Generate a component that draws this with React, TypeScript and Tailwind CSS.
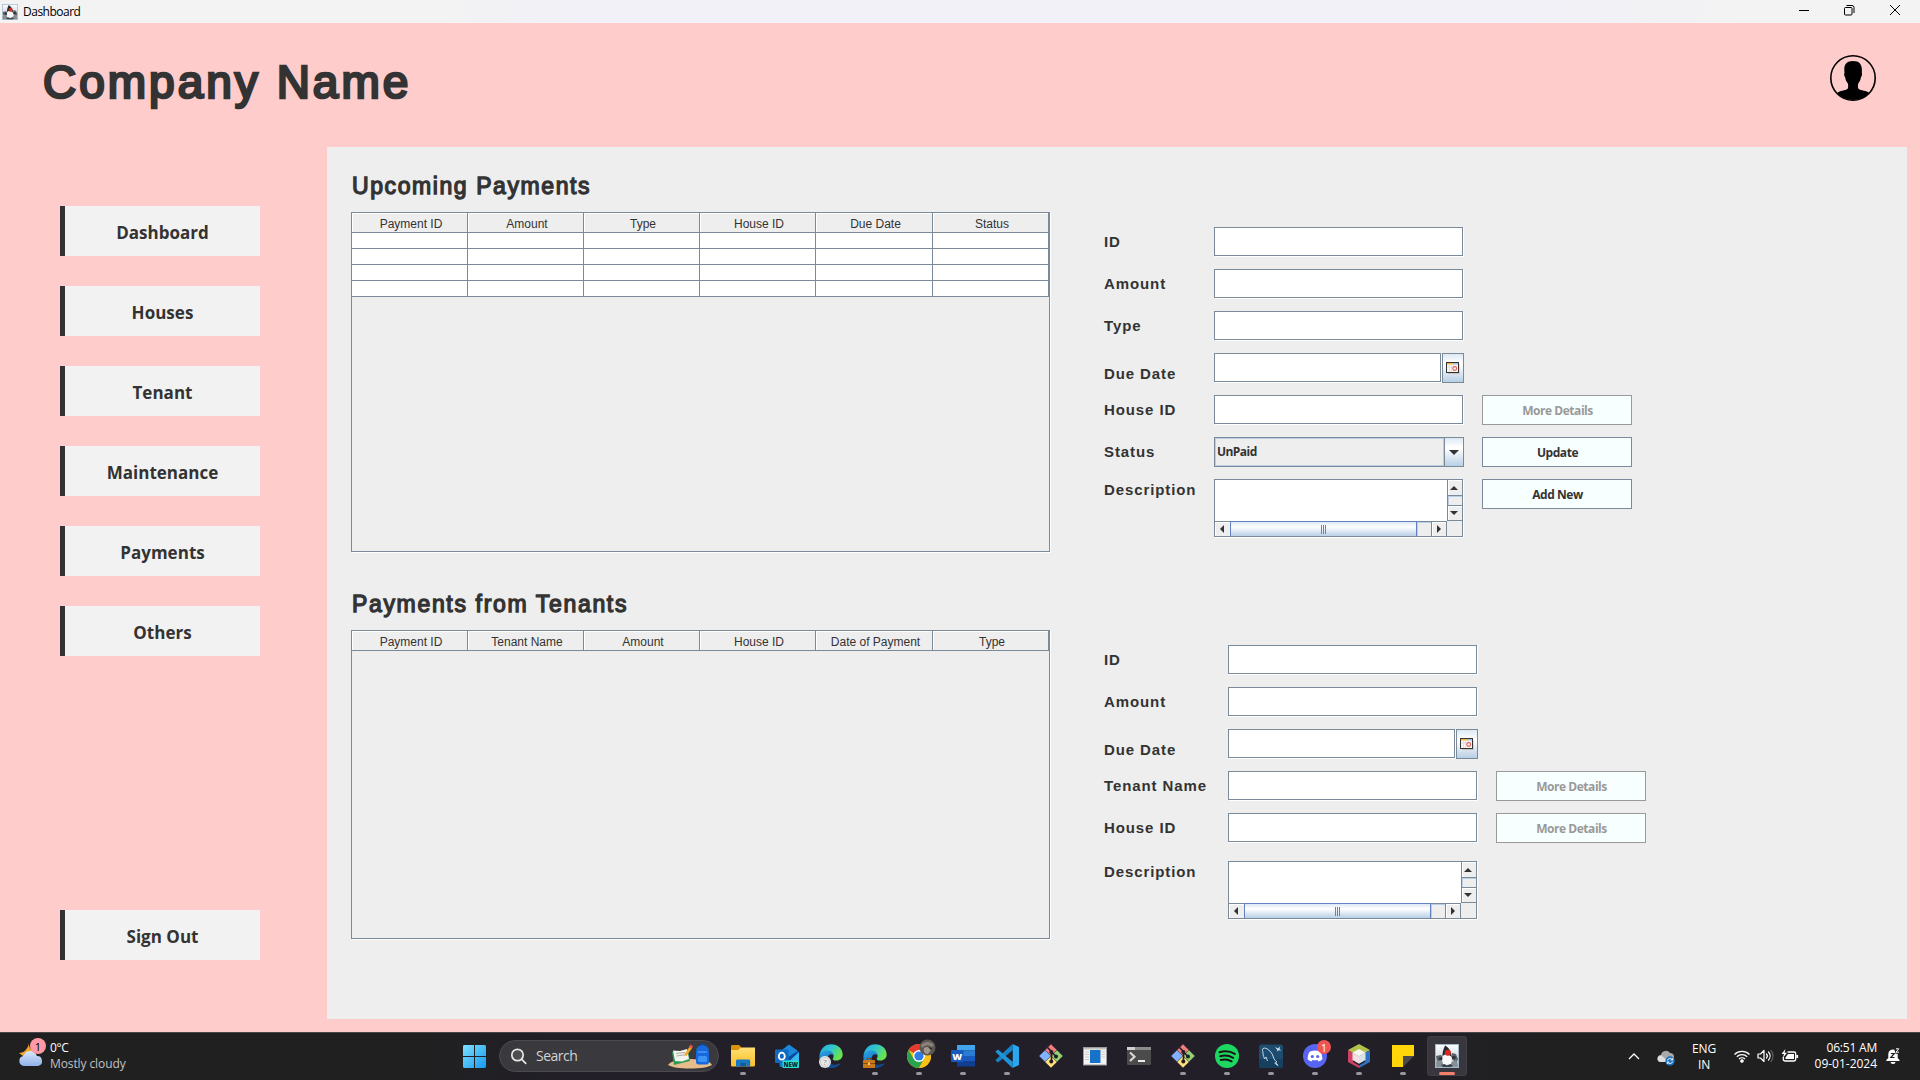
import React from "react";
import type { ReactNode } from "react";

const rounded = "font-['Liberation_Sans',Arial,sans-serif] text-[#333333]";
const segoe = "font-['Open_Sans','Noto_Sans',sans-serif]";

function DukeIcon({ size }: { size: number }) {
  return (
    <svg width={size} height={size} viewBox="0 0 24 24">
      <defs>
        <linearGradient id="dukeBg" x1="0" y1="0" x2="0" y2="1">
          <stop offset="0" stopColor="#fdfeff" />
          <stop offset="0.55" stopColor="#d5dde4" />
          <stop offset="1" stopColor="#8d9aa5" />
        </linearGradient>
      </defs>
      <rect x="0.5" y="0.5" width="23" height="23" fill="url(#dukeBg)" stroke="#9fb8ca" />
      <path d="M1 12l5-1 3 3-3 4-4-1z M17 9l4 1 2 5-2 4-4-4z" fill="#5b6368" />
      <path d="M1 18l5-2 4 6-8 1z M15 19l6-3 2 6-7 1z" fill="#858f96" />
      <path d="M8.500 12.500l-5 1.500 1 2 4-.5z M16 12l5 .5-1 2.500-4-.5z" fill="#2b2f32" />
      <path d="M10.500 2c3 2 5.800 6.500 6.300 11 .3 4-.5 7-2 9l-2.300-1.500-3.500 1.500c-1.700-3-2.200-7-1.200-11z" fill="#f8f8f8" />
      <path d="M10.200 1.500c4 2.500 6 6 6.600 11.500l-4.800-3.500-4.600 2.500c.2-4 1-7.500 2.800-10.500z" fill="#25292b" />
      <circle cx="12.800" cy="8.800" r="3" fill="#d8281f" />
      <path d="M6 21l3.500-1 2.500 1.500 3-1.500 3 1.500-2 1.500H8z" fill="#3c4246" />
    </svg>
  );
}

function Field({ className = "" }: { className?: string }) {
  return <div className={`h-[29px] border border-[#7a8a99] bg-white shadow-[1px_1px_0_#ffffff] ${className}`} />;
}

function CalendarButton() {
  return (
    <div className="ml-px flex h-[30px] w-[22px] items-center justify-center border border-[#7a8a99] bg-[linear-gradient(180deg,#dde8f3_0%,#ffffff_32%,#ffffff_38%,#b8cfe5_100%)]">
      <svg width="14" height="12" viewBox="0 0 14 12">
        <path d="M2 11.500h12V2" stroke="#c9bfb4" fill="none" />
        <rect x="0.5" y="0.5" width="12" height="10" fill="#f6f6f6" stroke="#333" />
        <path d="M1 1h6v1.500H1z" fill="#f5b942" />
        <path d="M7 1h5v1.500H7z" fill="#9dbfe8" />
        <path d="M3.500 3v7M5.500 3v7M1 5h6" stroke="#dcdcdc" strokeWidth="0.7" />
        <circle cx="8.700" cy="6.500" r="1.900" fill="#fff" stroke="#e4544e" strokeWidth="1.100" />
      </svg>
    </div>
  );
}

function DateField() {
  return (
    <div className="flex w-[250px]">
      <Field className="w-[227px]" />
      <CalendarButton />
    </div>
  );
}

function Combo() {
  return (
    <div className="flex h-[30px] w-[250px] border border-[#7a8a99]">
      <div className="flex flex-1 items-center border border-[#b8cfe5] bg-[#eeeeee] pl-px pb-px font-['Open_Sans','Noto_Sans',sans-serif] text-[12px] leading-none font-bold tracking-[-0.55px] text-[#333333]">
        UnPaid
      </div>
      <div className="flex w-[19px] items-center justify-center border-l border-[#7a8a99] bg-[linear-gradient(180deg,#dde8f3_0%,#ffffff_32%,#ffffff_38%,#b8cfe5_100%)]">
        <svg width="10" height="5" viewBox="0 0 10 5"><path d="M0 0h10L5 5z" fill="#333" /></svg>
      </div>
    </div>
  );
}

function TextArea() {
  return (
    <div className="flex h-[58px] w-[249px] flex-col border border-[#7a8a99] bg-[#eeeeee] shadow-[1px_1px_0_#ffffff]">
      <div className="flex h-[41px]">
        <div className="w-[232px] bg-white" />
        <div className="flex w-[15px] flex-col border-l border-[#7a8a99]">
          <div className="flex h-[16px] items-center justify-center border-b border-[#7a8a99] pr-[2px] shadow-[inset_1px_1px_0_#ffffff]">
            <svg width="8" height="4" viewBox="0 0 8 4"><path d="M0 4h8L4 0z" fill="#333" /></svg>
          </div>
          <div className="h-[10px] border-b border-[#7a8a99] shadow-[inset_1px_1px_0_#b8cfe5]" />
          <div className="flex h-[15px] items-center justify-center border-b border-[#7a8a99] pr-[2px] shadow-[inset_1px_1px_0_#ffffff]">
            <svg width="8" height="4" viewBox="0 0 8 4"><path d="M0 0h8L4 4z" fill="#333" /></svg>
          </div>
        </div>
      </div>
      <div className="flex h-[15px]">
        <div className="flex w-[15px] items-center justify-center border-t border-[#7a8a99] pr-[2px] shadow-[inset_1px_1px_0_#ffffff]">
          <svg width="4" height="8" viewBox="0 0 4 8"><path d="M4 0v8L0 4z" fill="#333" /></svg>
        </div>
        <div className="flex w-[187px] items-center justify-center gap-px border border-b-0 border-[#6382bf] bg-[linear-gradient(180deg,#dde8f3_0%,#ffffff_35%,#b8cfe5_100%)]">
          <div className="h-[9px] w-px bg-[#6382bf]" />
          <div className="h-[9px] w-px bg-[#6382bf]" />
          <div className="h-[9px] w-px bg-[#6382bf]" />
        </div>
        <div className="w-[14px] border-t border-[#7a8a99] shadow-[inset_1px_1px_0_#b8cfe5]" />
        <div className="flex w-[16px] items-center justify-center border-t border-r border-l border-[#7a8a99] shadow-[inset_1px_1px_0_#ffffff]">
          <svg width="4" height="8" viewBox="0 0 4 8"><path d="M0 0v8l4-4z" fill="#333" /></svg>
        </div>
      </div>
    </div>
  );
}

function Button({ children, disabled = false }: { children: ReactNode; disabled?: boolean }) {
  return (
    <button
      className={`ml-[18px] h-[30px] w-[150px] border bg-[#f8ffff] pt-px pl-px font-['Open_Sans','Noto_Sans',sans-serif] text-[12px] leading-none font-bold tracking-[-0.45px] ${
        disabled ? "border-[#999999] text-[#999999]" : "border-[#7a8a99] text-[#333333]"
      }`}
    >
      {children}
    </button>
  );
}

type Row = {
  label: string;
  kind?: "text" | "date" | "combo" | "area";
  button?: string;
  disabled?: boolean;
  gap?: boolean;
};

function Form({ rows, wide = false }: { rows: Row[]; wide?: boolean }) {
  return (
    <div className="flex flex-col gap-3">
      {rows.map((r) => (
        <div key={r.label} className={`flex h-[30px] items-start ${r.gap ? "mt-[6px]" : ""}`}>
          <div
            className={`${rounded} text-[15px] leading-5 font-bold tracking-[0.9px] whitespace-nowrap ${wide ? "w-[124px]" : "w-[110px]"} ${
              r.kind === "date" ? "pt-[11px]" : r.kind === "area" ? "pt-px" : "pt-[5px]"
            }`}
          >
            {r.label}
          </div>
          <div className="w-[250px] shrink-0">
            {r.kind === "date" ? <DateField /> : r.kind === "combo" ? <Combo /> : r.kind === "area" ? <TextArea /> : <Field className="w-[249px]" />}
          </div>
          {r.button && <Button disabled={r.disabled}>{r.button}</Button>}
        </div>
      ))}
    </div>
  );
}

function DataTable({ columns, rows, className }: { columns: string[]; rows: number; className: string }) {
  const grid = "grid grid-cols-[116px_116px_116px_116px_117px_116px]";
  return (
    <div className={`w-[699px] border border-[#7a8a99] bg-[#eeeeee] shadow-[1px_1px_0_#ffffff] ${className}`}>
      <div className={`${grid} h-[20px]`}>
        {columns.map((c) => (
          <div
            key={c}
            className="border-r border-b border-[#7a8a99] pt-[4px] pl-[3px] text-center font-['Liberation_Sans',Arial,sans-serif] text-[12px] leading-[15px] text-[#333333] shadow-[inset_1px_1px_0_#ffffff]"
          >
            {c}
          </div>
        ))}
      </div>
      {Array.from({ length: rows }, (_, i) => (
        <div key={i} className={`${grid} h-4 bg-white`}>
          {columns.map((c) => (
            <div key={c} className="border-r border-b border-[#7a8a99]" />
          ))}
        </div>
      ))}
    </div>
  );
}

function NavItem({ children }: { children: ReactNode }) {
  return (
    <div className={`${segoe} flex h-[50px] w-[200px] items-center justify-center border-l-[5px] border-[#333333] bg-[#f2f2f2] pt-[2px] text-[17px] leading-none font-bold tracking-[0.02px] text-[#333333]`}>
      {children}
    </div>
  );
}

function Ico({ children, size = 24 }: { children: ReactNode; size?: number }) {
  return <svg width={size} height={size} viewBox="0 0 24 24">{children}</svg>;
}

const edgeShape = (
  <>
    <path d="M0.500 12C1 5 6 0.300 12.200 0.300 18.800 0.300 23.700 5 23.700 10.600c0 3.800-3 6-6 6-2.600 0-4-.9-4-1.700 0-.7.900-1 .9-2.900 0-2.300-2.200-4.200-5.300-4.200C5 7.800 1 9 .5 12z" fill="url(#edgeTop)" />
    <path d="M0.400 12.500C.8 8.800 4 6.500 8.500 6.500c3.500 0 6 2.200 6.100 5-1.300-1.700-3.500-1.700-4.800-.2-1.900 2.200-1.500 6 1.300 8.500 2.500 2 6.500 1.900 10.400-.3C19.500 22.200 16 24 12 23.900 5 23.700 0 18.500.4 12.500z" fill="url(#edgeMid)" />
    <path d="M9.300 12.500c-1.800 4.500 1.500 8.500 6.200 8.300 2.500-.1 4.500-.8 6-1.500-2.500 3.500-6.300 4.800-9.500 4.600-4.500-1.200-6.500-7.400-2.700-11.400z" fill="#114a8b" />
  </>
);

const gitShape = (
  <>
    <path d="M12 0.200L17.800 6 12 11.800 6.200 6z" fill="#f07c7c" />
    <path d="M6 6.200L11.800 12 6 17.800.2 12z" fill="#82b1ff" />
    <path d="M18 6.200L23.800 12 18 17.800 12.200 12z" fill="#93d173" />
    <path d="M12 12.200L17.800 18 12 23.800 6.200 18z" fill="#ffe27c" />
    <path d="M8.500 3.500l4 4v10M12.500 8l4.500 4.500" stroke="#221e26" strokeWidth="1.600" fill="none" />
    <circle cx="12.300" cy="8" r="2" fill="#221e26" />
    <circle cx="17" cy="12.500" r="2" fill="#221e26" />
    <circle cx="12.300" cy="17.500" r="2" fill="#221e26" />
  </>
);

const apps: { name: string; icon: ReactNode; running?: boolean; active?: boolean; badge?: ReactNode }[] = [
  {
    name: "explorer",
    running: true,
    icon: (
      <Ico>
        <path d="M0 2.500C0 1.500.7 1 1.500 1H8l2 2v4H0z" fill="#d9920b" />
        <path d="M0 6h7l3-2.500h14v17.500c0 .8-.5 1.500-1.300 1.500H1.300C.5 22.500 0 21.800 0 21z" fill="url(#folder)" />
        <path d="M5 22.500V17c0-1 .7-1.600 1.600-1.600h11c.9 0 1.600.6 1.600 1.600v5.500h-3.700V19h-7v3.500z" fill="#1377c5" />
        <path d="M8.500 19h7v3.500h-7z" fill="#0d5da3" />
      </Ico>
    ),
  },
  {
    name: "outlook",
    icon: (
      <Ico>
        <path d="M4 8L13 1l11 7v13.500H4z" fill="#0a4c9c" />
        <path d="M6 7l8-6.500L23 7l-10 6z" fill="#1d88d9" />
        <path d="M24 8v13H10z" fill="#35b8f1" />
        <path d="M4 9l14 9-6 5H5z" fill="#1479ce" />
        <rect x="0" y="5.500" width="13.500" height="13.500" rx="1" fill="#0f6bc4" />
        <ellipse cx="6.800" cy="12.200" rx="3" ry="3.500" fill="none" stroke="#fff" strokeWidth="1.800" />
        <rect x="7.500" y="16.500" width="16.500" height="7.500" rx="1" fill="#2ce3d2" />
        <text x="15.800" y="22.600" textAnchor="middle" fontFamily="Open Sans, sans-serif" fontSize="6" fontWeight="800" fill="#06263a">NEW</text>
      </Ico>
    ),
  },
  {
    name: "edge",
    icon: (
      <Ico>
        {edgeShape}
        <circle cx="6" cy="18" r="6" fill="#e9e9e9" />
        <circle cx="6" cy="18" r="4.500" fill="none" stroke="#bdbdbd" strokeWidth="0.800" />
        <text x="6" y="21" textAnchor="middle" fontFamily="Open Sans, sans-serif" fontSize="8" fill="#888">?</text>
      </Ico>
    ),
  },
  {
    name: "edge-work",
    running: true,
    icon: (
      <Ico>
        {edgeShape}
        <rect x="0" y="16" width="12" height="8" rx="0.700" fill="#c9781d" />
        <path d="M0 19.500h12" stroke="#8d4a0d" strokeWidth="1" />
        <path d="M4 16v-1.500h4V16" stroke="#8d4a0d" fill="none" />
        <rect x="5" y="18.500" width="2" height="2.500" fill="#ffd257" />
      </Ico>
    ),
  },
  {
    name: "chrome",
    running: true,
    icon: (
      <Ico>
        <circle cx="12" cy="12" r="12" fill="#fbc117" />
        <path d="M12 12L1.600 6A12 12 0 0 1 22.400 6z" fill="#e33b2e" />
        <path d="M1.600 6A12 12 0 0 0 12 24l5.200-9L12 12 6.800 15z" fill="#2ba24c" />
        <path d="M12 6h10.400a12 12 0 0 1-10.400 18l5.200-9z" fill="#fbc117" />
        <circle cx="12" cy="12" r="6" fill="#fff" />
        <circle cx="12" cy="12" r="4.600" fill="#2f7de9" />
      </Ico>
    ),
    badge: (
      <svg className="absolute -top-[5px] left-[12px]" width="17" height="17" viewBox="0 0 17 17">
        <circle cx="8.500" cy="8.500" r="8" fill="#5e5650" />
        <path d="M2 6c4-4 9-4 13 0l-2 2C9 5 6 6 3 9z" fill="#8b8279" />
        <path d="M5 9c3-2 6-1 7 2l-3 4c-3 0-5-2-4-6z" fill="#a2988e" />
        <path d="M9 8l4 1-1 2z" fill="#29241f" />
      </svg>
    ),
  },
  {
    name: "word",
    running: true,
    icon: (
      <Ico>
        <path d="M6 1h18v5.500H6z" fill="#41a5ee" />
        <path d="M6 6.500h18V12H6z" fill="#2b7cd3" />
        <path d="M6 12h18v5H6z" fill="#185abd" />
        <path d="M6 17h18v5.500H6z" fill="#103f91" />
        <rect x="0" y="6" width="12.500" height="12" rx="1" fill="#185abd" />
        <text x="6.200" y="15.700" textAnchor="middle" fontFamily="Open Sans, sans-serif" fontSize="9.500" fontWeight="800" fill="#fff">W</text>
      </Ico>
    ),
  },
  {
    name: "vscode",
    running: true,
    icon: (
      <Ico>
        <path d="M17.500 0L24 3v18l-6.500 3z" fill="#2aa8ef" />
        <path d="M17.500 0v6.500L3 18.500 0.300 16.200z" fill="#1583c9" />
        <path d="M17.500 24v-6.500L3 5.500 0.300 7.800z" fill="#1f93da" />
        <path d="M17.500 6.500v11L11 12z" fill="#221e26" />
      </Ico>
    ),
  },
  { name: "git", icon: <Ico>{gitShape}</Ico> },
  {
    name: "window",
    icon: (
      <Ico>
        <rect x="0.500" y="3.500" width="23" height="17.500" fill="#f4f4f4" stroke="#9b9b9b" />
        <path d="M1 4h22v1.500H1z" fill="#c2c2c2" />
        <path d="M2 8h4M2 10.500h4M2 13h4M2 15.500h4M18.500 8h3.500M18.500 10.500h3.500M18.500 13h3.500" stroke="#ccc" />
        <rect x="7" y="6" width="10.500" height="13" fill="#1673c9" />
      </Ico>
    ),
  },
  {
    name: "terminal",
    icon: (
      <Ico>
        <rect x="0" y="3" width="24" height="18" rx="1" fill="#4b4b4b" />
        <path d="M0 3h24v3H0z" fill="#8b8b8b" />
        <path d="M0 3h8v3H0z" fill="#d0d0d0" />
        <path d="M3 8.500l4.500 4.200L3 17" stroke="#d6d6d6" strokeWidth="2.200" fill="none" />
        <path d="M11 17h7" stroke="#fff" strokeWidth="1.800" />
      </Ico>
    ),
  },
  { name: "git-gui", running: true, icon: <Ico>{gitShape}</Ico> },
  {
    name: "spotify",
    running: true,
    icon: (
      <Ico>
        <circle cx="12" cy="12" r="12" fill="#1ed760" />
        <path d="M4.500 8.300c5-1.500 11-.9 15.300 1.600M5.200 12.300c4.500-1.300 9-.7 13 1.500M5.800 16c3.800-1 7.500-.6 10.800 1.300" stroke="#191414" strokeWidth="2" strokeLinecap="round" fill="none" />
      </Ico>
    ),
  },
  {
    name: "mysql",
    running: true,
    icon: (
      <Ico>
        <rect x="0" y="0.500" width="24" height="23.500" rx="2.500" fill="#1d4c70" />
        <path d="M0 15h24v6.500a2.500 2.500 0 0 1-2.500 2.500h-19A2.500 2.500 0 0 1 0 21.500z" fill="#16405f" />
        <path d="M5.500 15c-.5-2-1.300-3-1.500-5.500C3.800 6.500 3 5.500 4 4.500c2-1 4 0 5 1 3 2 4.500 4.500 5.300 7.500.7 2.500 2 3.700 3.700 5l-1.500.5 2.500 3-3.500-2.500M5.500 15l1.500-2 1.500 4" stroke="#d9e6ef" strokeWidth="0.900" fill="none" />
        <path d="M16 3l3 1.500 2-2-.5 2.800 2 1.200-3-.2-1 1.500-.3-2z" fill="#d9e6ef" />
      </Ico>
    ),
  },
  {
    name: "discord",
    running: true,
    icon: (
      <Ico>
        <circle cx="12" cy="12" r="12" fill="#5865f2" />
        <path d="M8.500 7c2-.7 5-.7 7 0l1.800.8c1.400 2 2.200 4.500 2 7.700-1.300 1-2.600 1.600-3.800 1.900l-1-1.500c-1.600.4-3.400.4-5 0l-1 1.500c-1.200-.3-2.500-.9-3.800-1.900-.2-3.200.6-5.700 2-7.700z" fill="#fff" />
        <circle cx="9.300" cy="12.500" r="1.600" fill="#5865f2" />
        <circle cx="14.700" cy="12.500" r="1.600" fill="#5865f2" />
      </Ico>
    ),
    badge: (
      <div className={`${segoe} absolute -top-[4px] left-[14px] flex h-[14px] w-[14px] items-center justify-center rounded-full bg-[#ee5454] text-[11px] leading-none text-white`}>1</div>
    ),
  },
  {
    name: "netbeans",
    running: true,
    icon: (
      <Ico>
        <path d="M12 0l11 6-11 6.500L1 6z" fill="#b2c248" />
        <path d="M1 6l5 3v9l6 3.500V24L1 18z" fill="#ce4266" />
        <path d="M23 6l-5 3v9l-6 3.500V24l11-6z" fill="#2f72c4" />
        <path d="M12 5l6.500 3.500L12 12.300 5.500 8.500z" fill="#f4f6ef" />
        <path d="M5.500 8.500l6.500 3.800v7.500L5.500 16z" fill="#f0dfe4" />
        <path d="M18.500 8.500L12 12.300v7.500l6.500-3.800z" fill="#dbe3ea" />
      </Ico>
    ),
  },
  {
    name: "sticky-notes",
    running: true,
    icon: (
      <Ico>
        <path d="M1 1h22v11H12v11H1z" fill="#ffd60a" />
        <path d="M12 12h11L12 23z" fill="#4a4a4a" />
      </Ico>
    ),
  },
  { name: "java", running: true, active: true, icon: <DukeIcon size={24} /> },
];

function TaskbarGradients() {
  return (
    <svg width="0" height="0" className="absolute">
      <defs>
        <linearGradient id="edgeTop" x1="0" y1="0" x2="1" y2="0.500">
          <stop offset="0" stopColor="#2aa6e0" />
          <stop offset="0.500" stopColor="#2fc6cf" />
          <stop offset="1" stopColor="#6be34b" />
        </linearGradient>
        <linearGradient id="edgeMid" x1="0" y1="0" x2="0.600" y2="1">
          <stop offset="0" stopColor="#2ba3e6" />
          <stop offset="1" stopColor="#0f66b8" />
        </linearGradient>
        <linearGradient id="folder" x1="0" y1="0" x2="0" y2="1">
          <stop offset="0" stopColor="#ffdf70" />
          <stop offset="1" stopColor="#fbbf2b" />
        </linearGradient>
        <linearGradient id="win" x1="0" y1="0" x2="1" y2="1">
          <stop offset="0" stopColor="#7fe0fd" />
          <stop offset="1" stopColor="#1597f0" />
        </linearGradient>
        <linearGradient id="cloud" x1="0" y1="0" x2="0" y2="1">
          <stop offset="0" stopColor="#dbe7fb" />
          <stop offset="1" stopColor="#8fb2ea" />
        </linearGradient>
      </defs>
    </svg>
  );
}

function Taskbar() {
  return (
    <div className={`${segoe} flex h-12 border-t border-[#48464a] bg-[linear-gradient(90deg,#202020_0%,#202021_22%,#221f28_30%,#221f28_70%,#202021_80%,#202020_100%)] text-white`}>
      <TaskbarGradients />
      <div className="flex w-[462px] items-start pt-[10px] pl-[19px]">
        <div className="relative h-6 w-6">
          <Ico>
            <path d="M10 0c-.5 4 2 8 7 9l-5 4H4l-4-3c5 0 9-4 10-10z" fill="#f0a52c" />
            <path d="M5 23a5 5 0 0 1-.6-9.900 7 7 0 0 1 13.500 0A5 5 0 0 1 19 23z" fill="url(#cloud)" />
          </Ico>
          <div className="absolute -top-[5px] left-[11px] flex h-4 w-4 items-center justify-center rounded-full bg-[#ff99a4] text-[11px] leading-none text-black">1</div>
        </div>
        <div className="pl-[7px] text-[12px] leading-4 tracking-[-0.1px]">
          <div className="-mt-[3px] tracking-[-0.4px]">0°C</div>
          <div className="text-[#c0c0c0]">Mostly cloudy</div>
        </div>
      </div>
      <div className="flex w-[37px] items-center pb-px pl-px">
        <svg width="23" height="23" viewBox="0 0 23 23">
          <path d="M0 1.500C0 .6.600 0 1.500 0H11v11H0zM12 0h9.500c.9 0 1.500.6 1.500 1.500V11H12zM0 12h11v11H1.500C.6 23 0 22.400 0 21.500zM12 12h11v9.500c0 .9-.6 1.500-1.500 1.500H12z" fill="url(#win)" />
        </svg>
      </div>
      <div className="mt-[7px] flex h-8 w-[220px] items-center rounded-full border border-[#4c4a50] bg-[#3a393d] pl-[10px]">
        <svg width="17" height="17" viewBox="0 0 17 17" fill="none" stroke="#e6e6e6" strokeWidth="1.700" strokeLinecap="round">
          <circle cx="7.500" cy="7" r="5.700" fill="#4e4d52" />
          <path d="M11.700 11.300l4 4" />
        </svg>
        <div className="pl-[9px] text-[14px] leading-none tracking-[-0.5px] text-[#d4d4d4]">Search</div>
        <svg className="ml-auto mr-[5px]" width="46" height="26" viewBox="0 0 46 26">
          <path d="M1 22c2-3 8-6 22-6s21 3 22 6c-4 2.500-12 3.500-22 3.500S5 24.500 1 22z" fill="#e8bd8b" />
          <path d="M5 9l16-2 2 11-16 4z" fill="#2e9b58" />
          <path d="M6 7.500l7 .5 7-2 2 10-7 2.500-7-.5z" fill="#f4f3ee" />
          <path d="M9 10.500l9-1M9.500 13l9-1.300" stroke="#a9a9a9" />
          <path d="M17 12l6-9 2.500 1.500-6 8.500z" fill="#f4a52b" />
          <path d="M22 4l1.500-2.500 2.500 1.700L24.500 5.500z" fill="#e4544e" />
          <path d="M29 10c0-5 2-8 6.500-8S42 5 42 10v9c0 1.500-1 2.500-2.500 2.500h-8C30 21.500 29 20.500 29 19z" fill="#1668dc" />
          <path d="M33 3c0-2.500 5-2.500 5 0" stroke="#0d4aa8" strokeWidth="1.500" fill="none" />
          <rect x="31" y="13" width="9" height="6" rx="1.500" fill="#3d93f5" />
          <path d="M31 9h9" stroke="#5aa7ff" strokeWidth="1.200" />
        </svg>
      </div>
      <div className="flex pl-[2px]">
        {apps.map((a) => (
          <div key={a.name} className="flex w-11 justify-center pt-[3px]">
            <div className={`flex h-10 w-10 flex-col items-center rounded pt-2 ${a.active ? "bg-[#39373d] shadow-[inset_0_0_0_1px_#424046]" : ""}`}>
              <div className="relative h-6 w-6">
                {a.icon}
                {a.badge}
              </div>
              {a.running && <div className={`mt-1 h-[3px] rounded-full ${a.active ? "w-4 bg-[#f4806c]" : "w-[6px] bg-[#98979a]"}`} />}
            </div>
          </div>
        ))}
      </div>
      <div className="ml-auto flex h-[46px] items-center">
        <svg width="12" height="7" viewBox="0 0 12 7" fill="none" stroke="#fff" strokeWidth="1.300"><path d="M1 6l5-5 5 5" /></svg>
        <svg className="mt-[3px] ml-[17px]" width="19" height="16" viewBox="0 0 19 16">
          <path d="M4 12a3.500 3.500 0 0 1 0-7 5 5 0 0 1 9-2 4 4 0 0 1 4 4v5z" fill="#a8a8a8" />
          <path d="M0.500 9a3.500 3.500 0 0 1 4-3.500L12 12H4a3.500 3.500 0 0 1-3.500-3z" fill="#dedede" />
          <circle cx="13" cy="11" r="4.700" fill="#1b72c0" />
          <path d="M10.300 10.500a2.800 2.800 0 0 1 5-.8m.4-1.700v2h-2M15.700 11.500a2.800 2.800 0 0 1-5 .8m-.4 1.700v-2h2" stroke="#fff" strokeWidth="0.900" fill="none" />
        </svg>
        <div className="mt-px ml-[15px] w-[26px] text-center text-[12px] leading-4 tracking-[-0.2px]">ENG<br />IN</div>
        <svg className="ml-[16px]" width="18" height="14" viewBox="0 0 18 14" fill="none" stroke="#fff" strokeWidth="1.200">
          <path d="M1.500 5.500a10.500 10.500 0 0 1 15 0M3.800 7.800a7.400 7.400 0 0 1 10.400 0M6 10a4.300 4.300 0 0 1 6 0" />
          <circle cx="9" cy="12" r="1.200" fill="#fff" />
        </svg>
        <svg className="ml-[6px]" width="18" height="14" viewBox="0 0 18 14" fill="none" stroke="#fff" strokeWidth="1.200" strokeLinecap="round">
          <path d="M1 5h2.500L7 1.500v11L3.500 9H1z" strokeLinejoin="round" />
          <path d="M9.500 5a3 3 0 0 1 0 4M11.500 3a6 6 0 0 1 0 8" />
          <path d="M14 1.500a8.500 8.500 0 0 1 0 11" stroke="#5c5c5c" />
        </svg>
        <svg className="ml-[6px]" width="18" height="14" viewBox="0 0 18 14" fill="none" stroke="#fff" strokeWidth="1.300">
          <path d="M6.500 3H13c1 0 1.700.7 1.700 1.700v5.600c0 1-.7 1.700-1.700 1.700H4c-1 0-1.700-.7-1.700-1.700V8" />
          <path d="M4.500 8.500V10H13V5H7z" fill="#fff" stroke="none" />
          <path d="M16.200 6v3" strokeWidth="1.800" />
          <path d="M4.500 0L0.500 5H3L1.800 9 6 3.800H3.600z" fill="#fff" stroke="none" />
        </svg>
        <div className="ml-[14px] w-[64px] text-right text-[12px] leading-4 tracking-[-0.02px] whitespace-nowrap">
          <div className="tracking-[-0.2px]">06:51 AM</div>
          <div>09-01-2024</div>
        </div>
        <svg className="mr-[20px] ml-[9px]" width="14" height="16" viewBox="0 0 14 16">
          <path d="M2.300 10V6a4.500 4.500 0 0 1 6.200-4.200L9.500 5.500l2.200.5v4l1.800 2v1H.3v-1z" fill="#fff" />
          <path d="M4.500 14h5a2.500 2 0 0 1-5 0z" fill="#fff" />
          <path d="M4.800 5.500h3.500L4.800 9.500h3.700" stroke="#202020" strokeWidth="1.200" fill="none" />
          <path d="M10 .8h2.800L10 4.200h3" stroke="#fff" strokeWidth="1" fill="none" />
        </svg>
      </div>
    </div>
  );
}

export default function App() {
  return (
    <div className="flex h-[1080px] w-[1920px] flex-col overflow-hidden bg-[#ffcccc]">
      <div className={`${segoe} flex h-[23px] items-center bg-[linear-gradient(90deg,#f3f3f3_0%,#f3f3f3_22%,#f1f1f7_30%,#f1f1f7_80%,#f3f3f3_92%)] pl-[2px] text-black`}>
        <DukeIcon size={16} />
        <div className="pt-px pl-[5px] text-[12px] leading-none tracking-[-0.5px]">Dashboard</div>
        <div className="ml-auto mr-[20px] flex items-center gap-[35px] pb-[3px]">
          <svg width="10" height="10" viewBox="0 0 10 10"><path d="M0 5.500h10" stroke="#000" /></svg>
          <svg width="11" height="11" viewBox="0 0 11 11" fill="none" stroke="#000">
            <rect x="0.500" y="2.500" width="7.500" height="7.500" rx="1" />
            <path d="M2.500 0.500h5.500a2 2 0 0 1 2 2v5.500" />
          </svg>
          <svg width="10" height="10" viewBox="0 0 10 10" stroke="#000"><path d="M0 0l10 10M10 0L0 10" /></svg>
        </div>
      </div>

      <div className="flex h-[124px] items-start justify-between pr-[44px] pl-[43px]">
        <h1 className={`${rounded} pt-[31px] text-[46px] leading-[56px] font-normal tracking-[3px] [-webkit-text-stroke:2.600px_#333333]`}>Company Name</h1>
        <svg className="mt-8" width="46" height="46" viewBox="0 0 46 46">
          <circle cx="23" cy="23" r="22.200" fill="none" stroke="#000" strokeWidth="1.600" />
          <path d="M7 38c3-2.500 8-2.500 10.500-4 1-1.500.7-3.500.4-5.500-1.600-1.700-2.500-4-2.800-6.500-1.200-1-1-3-.6-4.500C13.500 10 16 6 23 6s9.500 4 8.800 11.500c.4 1.500.4 3.500-.8 4.500-.3 2.500-1.200 4.800-2.800 6.500-.3 2-.6 4 .4 5.500C31 35.500 36.500 35.500 39.500 38A22.500 22.500 0 0 1 7 38z" fill="#000" />
        </svg>
      </div>

      <div className="flex h-[885px]">
        <nav className="flex w-[327px] flex-col gap-[30px] pt-[59px] pl-[60px]">
          {["Dashboard", "Houses", "Tenant", "Maintenance", "Payments", "Others"].map((n) => (
            <NavItem key={n}>{n}</NavItem>
          ))}
          <div className="mt-[224px]">
            <NavItem>Sign Out</NavItem>
          </div>
        </nav>

        <main className="h-[872px] w-[1580px] bg-[#eeeeee] pl-6">
          <section className="flex h-[418px]">
            <div className="w-[753px] pt-[23px]">
              <h2 className={`${rounded} h-[42px] pl-px text-[23px] leading-8 font-normal tracking-[1.58px] [-webkit-text-stroke:1.300px_#333333]`}>Upcoming Payments</h2>
              <DataTable className="h-[340px]" rows={4} columns={["Payment ID", "Amount", "Type", "House ID", "Due Date", "Status"]} />
            </div>
            <div className="pt-[80px]">
              <Form
                rows={[
                  { label: "ID" },
                  { label: "Amount" },
                  { label: "Type" },
                  { label: "Due Date", kind: "date" },
                  { label: "House ID", button: "More Details", disabled: true },
                  { label: "Status", kind: "combo", button: "Update" },
                  { label: "Description", kind: "area", button: "Add New" },
                ]}
              />
            </div>
          </section>
          <section className="flex h-[454px]">
            <div className="w-[753px] pt-[23px]">
              <h2 className={`${rounded} h-[42px] pl-px text-[23px] leading-8 font-normal tracking-[1.66px] [-webkit-text-stroke:1.300px_#333333]`}>Payments from Tenants</h2>
              <DataTable className="h-[309px]" rows={0} columns={["Payment ID", "Tenant Name", "Amount", "House ID", "Date of Payment", "Type"]} />
            </div>
            <div className="pt-[80px]">
              <Form
                wide
                rows={[
                  { label: "ID" },
                  { label: "Amount" },
                  { label: "Due Date", kind: "date" },
                  { label: "Tenant Name", button: "More Details", disabled: true },
                  { label: "House ID", button: "More Details", disabled: true },
                  { label: "Description", kind: "area", gap: true },
                ]}
              />
            </div>
          </section>
        </main>
      </div>

      <Taskbar />
    </div>
  );
}
